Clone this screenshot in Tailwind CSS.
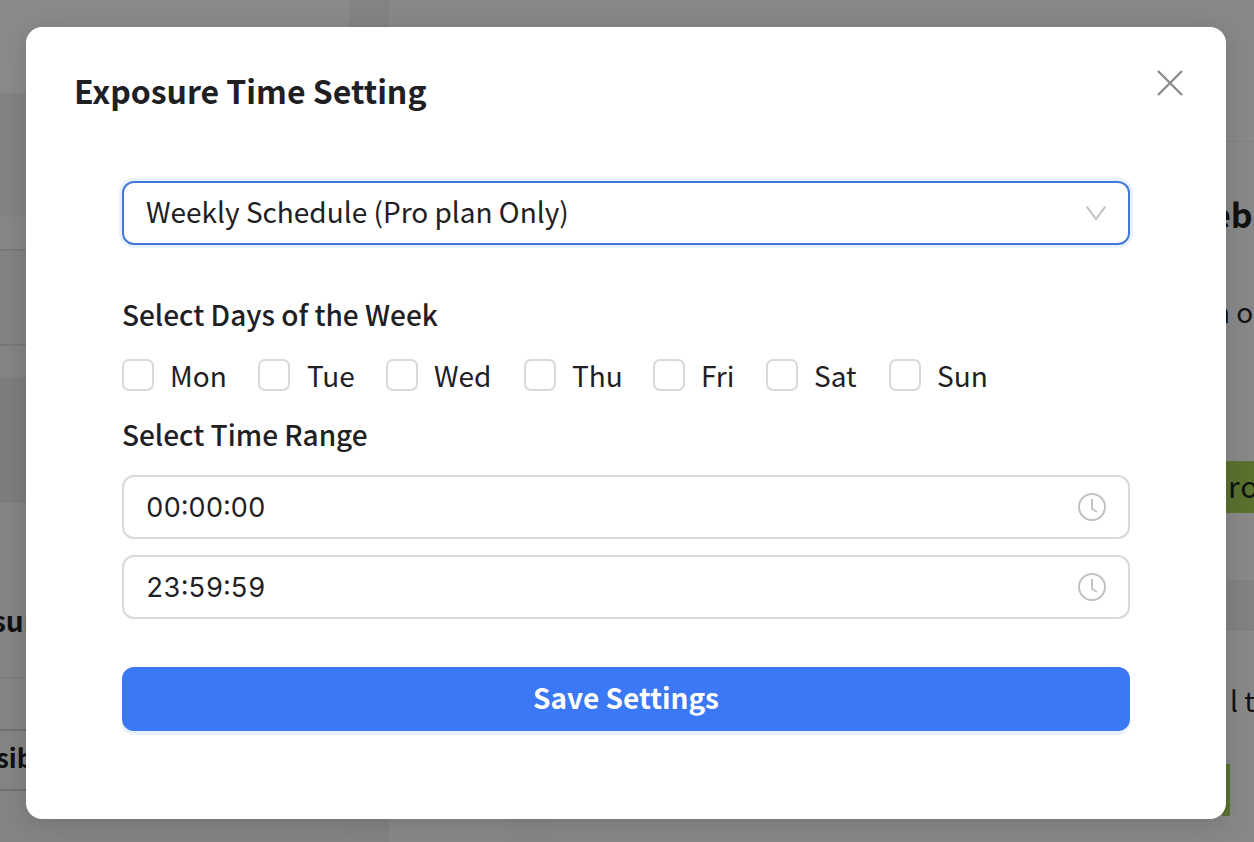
<!DOCTYPE html>
<html lang="en">
  <head>
    <meta charset="UTF-8" />
    <title>Exposure Time Setting</title>
    <script src="https://cdn.jsdelivr.net/npm/@tailwindcss/browser@4"></script>
  </head>
  <body class="relative h-[842px] w-[1254px] overflow-hidden bg-[#858687] font-['Noto_Sans_CJK_SC','Noto_Sans',sans-serif] text-[#1f2023]">
    <!-- Dimmed page behind the modal -->
    <div class="absolute inset-0 flex bg-[#868788]">
      <div class="w-[350px] overflow-hidden border-r-[1px] border-[#7f8081]">
        <div class="h-[93px] bg-[#898a8b]"></div>
        <div class="h-[124px] bg-[#818384]"></div>
        <div class="h-[34px] border-b-[2px] border-[#76787a] bg-[#858687]"></div>
        <div class="h-[95px] border-b-[2px] border-[#76787a] bg-[#818384]"></div>
        <div class="h-[32px] bg-[#838485]"></div>
        <div class="h-[125px] bg-[#7b7d7e]"></div>
        <div class="flex h-[339px] flex-col bg-[#838485]">
          <div class="mt-[99px] ml-[-8px] text-[28px] leading-[36px] font-bold text-[#111]">sur</div>
          <div class="mt-[39px] h-[52px] border-t-[1px] border-[#77797a]"></div>
          <div class="flex h-[62px] items-center border-y-[2px] border-[#6f7172] pb-[8px] text-[26px] font-bold text-[#111]"><span class="ml-[-4px]">sib</span></div>
        </div>
      </div>
      <div class="w-[39px] bg-[#828384]"></div>
      <div class="relative flex-1 bg-[#888889]">
        <div class="mt-[141px] h-[1px] bg-[#7f8081]"></div>
        <div class="absolute right-0 bottom-0 left-[116px] h-[23px] bg-[#858687]"></div>
        <div class="absolute right-0 bottom-0 left-[166px] h-[23px] bg-[#878788]"></div>
        <div class="absolute top-[190px] right-0 w-[28px] overflow-hidden text-[34px] leading-[48px] font-bold whitespace-nowrap text-[#111]"><span class="ml-[-15px]">ebs</span></div>
        <div class="absolute top-[293px] right-0 w-[28px] overflow-hidden text-[28px] leading-[36px] whitespace-nowrap text-[#111]"><span class="ml-[-13px]">n o</span></div>
        <div class="absolute top-[461px] right-0 flex h-[52px] w-[28px] items-center overflow-hidden bg-[#58712f] pb-[4px] pl-[2px] text-[30px] tracking-[1px] text-[#111]">ro</div>
        <div class="absolute top-[580px] right-0 h-[50px] w-[28px] border-b-[1px] border-[#77797a] bg-[#818283]"></div>
        <div class="absolute top-[682px] right-0 w-[28px] overflow-hidden pl-[4px] text-[28px] leading-[36px] whitespace-nowrap text-[#111]">l te</div>
        <div class="absolute top-[764px] right-[24px] h-[52px] w-[8px] bg-[#58712f]"></div>
      </div>
    </div>

    <!-- Modal -->
    <div class="absolute top-[27px] left-[26px] flex h-[792px] w-[1200px] flex-col rounded-[16px] bg-white px-[48px] pt-[38px] shadow-[0_4px_24px_rgba(0,0,0,0.14)]">
      <div class="flex items-start justify-between">
        <h1 class="text-[32px] leading-[50px] font-bold">Exposure Time Setting</h1>
        <svg class="mt-[4px] mr-[-6px] h-[28px] w-[28px] text-[#8c8c8c]" viewBox="0 0 28 28" fill="none" stroke="currentColor" stroke-width="2.4">
          <path d="M2 2 26 26M26 2 2 26" />
        </svg>
      </div>

      <div class="mt-[66px] flex flex-col px-[48px]">
        <div class="flex h-[64px] items-center justify-between rounded-[12px] border-[2px] border-[#4279d8] px-[22px] shadow-[0_0_0_3px_#e8f2fe]">
          <span class="pb-[4px] text-[28px]">Weekly Schedule (Pro plan Only)</span>
          <svg class="h-[14px] w-[20px] text-[#c2c2c2]" viewBox="0 0 20 14" fill="none" stroke="currentColor" stroke-width="2">
            <path d="M.7 .7 10 13 19.3 .7" />
          </svg>
        </div>

        <h2 class="mt-[47px] text-[28px] leading-[44px] font-medium">Select Days of the Week</h2>

        <div class="mt-[23px] flex h-[32px] items-center text-[28px]">
          <span class="h-[32px] w-[32px] rounded-[7px] border-[2px] border-[#d9d9d9]"></span>
          <span class="ml-[16px] w-[88px]">Mon</span>
          <span class="h-[32px] w-[32px] rounded-[7px] border-[2px] border-[#d9d9d9]"></span>
          <span class="ml-[17px] w-[79px]">Tue</span>
          <span class="h-[32px] w-[32px] rounded-[7px] border-[2px] border-[#d9d9d9]"></span>
          <span class="ml-[16px] w-[90px]">Wed</span>
          <span class="h-[32px] w-[32px] rounded-[7px] border-[2px] border-[#d9d9d9]"></span>
          <span class="ml-[16px] w-[81px]">Thu</span>
          <span class="h-[32px] w-[32px] rounded-[7px] border-[2px] border-[#d9d9d9]"></span>
          <span class="ml-[16px] w-[65px]">Fri</span>
          <span class="h-[32px] w-[32px] rounded-[7px] border-[2px] border-[#d9d9d9]"></span>
          <span class="ml-[16px] w-[75px]">Sat</span>
          <span class="h-[32px] w-[32px] rounded-[7px] border-[2px] border-[#d9d9d9]"></span>
          <span class="ml-[16px]">Sun</span>
        </div>

        <h2 class="mt-[21px] text-[28px] leading-[44px] font-medium">Select Time Range</h2>

        <div class="mt-[19px] flex h-[64px] items-center justify-between rounded-[12px] border-[2px] border-[#d9d9d9] px-[22px]">
          <span class="pt-[3px] font-['Inter',sans-serif] text-[27px] tabular-nums">00:00:00</span>
          <svg class="h-[28px] w-[28px] text-[#c2c2c2]" viewBox="0 0 28 28" fill="none" stroke="currentColor" stroke-width="2">
            <circle cx="14" cy="14" r="13" />
            <path d="M14 6V16L19 19" />
          </svg>
        </div>
        <div class="mt-[16px] flex h-[64px] items-center justify-between rounded-[12px] border-[2px] border-[#d9d9d9] px-[22px]">
          <span class="pt-[3px] font-['Inter',sans-serif] text-[27px] tabular-nums">23:59:59</span>
          <svg class="h-[28px] w-[28px] text-[#c2c2c2]" viewBox="0 0 28 28" fill="none" stroke="currentColor" stroke-width="2">
            <circle cx="14" cy="14" r="13" />
            <path d="M14 6V16L19 19" />
          </svg>
        </div>

        <button class="mt-[48px] h-[64px] rounded-[12px] bg-[#3b78f6] pb-[4px] text-[28px] font-bold text-white shadow-[0_4px_0_#e8f2fe]">Save Settings</button>
      </div>
    </div>
  </body>
</html>
